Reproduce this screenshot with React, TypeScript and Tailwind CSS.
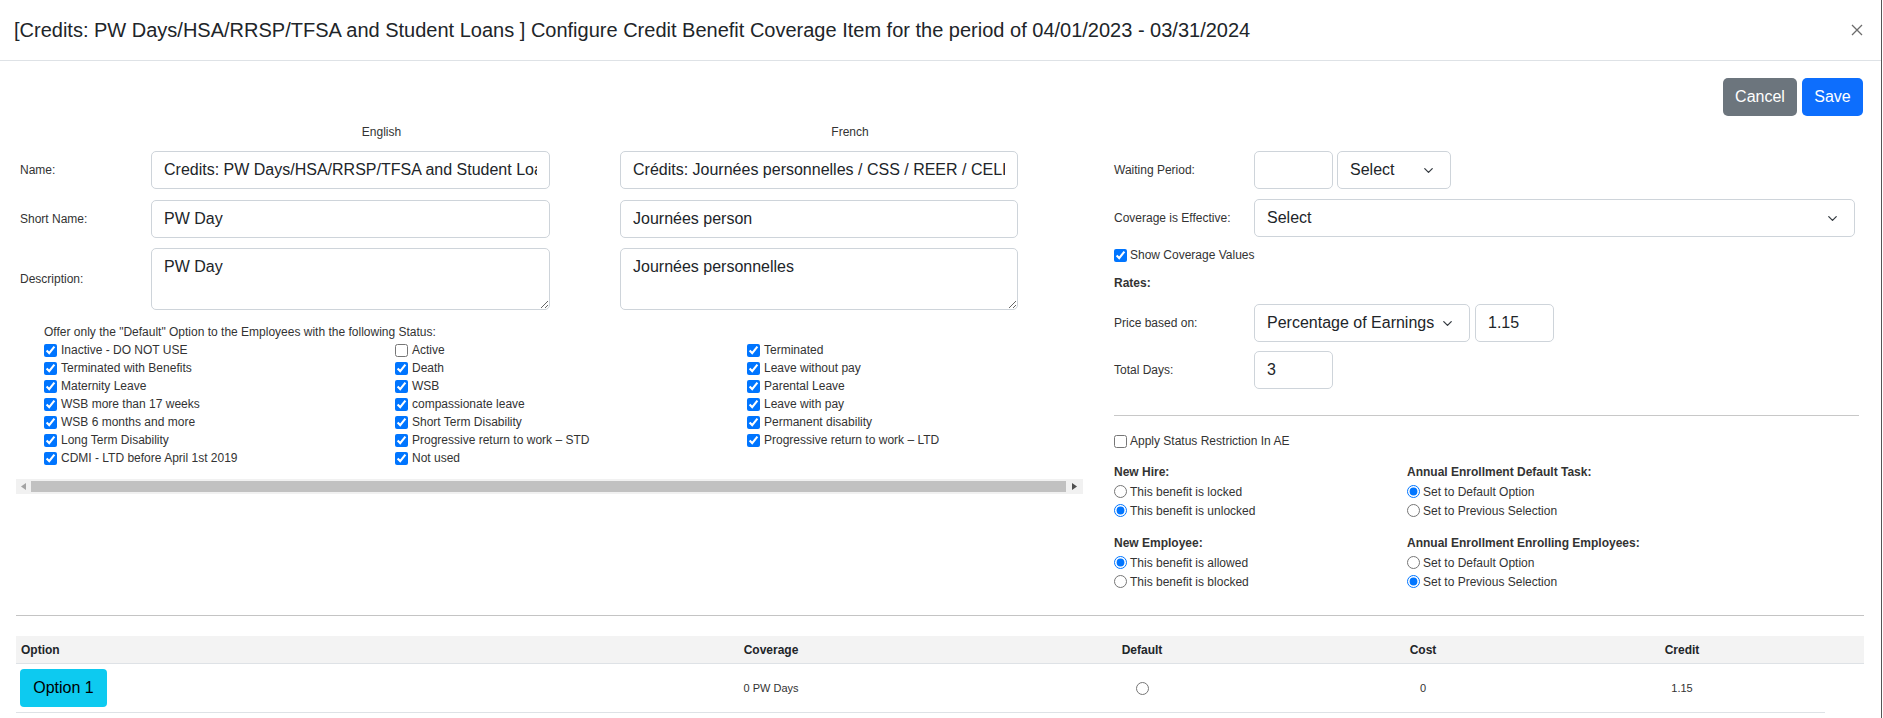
import React from "react";
import { ChevronDown } from "lucide-react";

const statusColumns: { label: string; checked: boolean }[][] = [
  [
    { label: "Inactive - DO NOT USE", checked: true },
    { label: "Terminated with Benefits", checked: true },
    { label: "Maternity Leave", checked: true },
    { label: "WSB more than 17 weeks", checked: true },
    { label: "WSB 6 months and more", checked: true },
    { label: "Long Term Disability", checked: true },
    { label: "CDMI - LTD before April 1st 2019", checked: true },
  ],
  [
    { label: "Active", checked: false },
    { label: "Death", checked: true },
    { label: "WSB", checked: true },
    { label: "compassionate leave", checked: true },
    { label: "Short Term Disability", checked: true },
    { label: "Progressive return to work – STD", checked: true },
    { label: "Not used", checked: true },
  ],
  [
    { label: "Terminated", checked: true },
    { label: "Leave without pay", checked: true },
    { label: "Parental Leave", checked: true },
    { label: "Leave with pay", checked: true },
    { label: "Permanent disability", checked: true },
    { label: "Progressive return to work – LTD", checked: true },
  ],
];

function TextInput({ value, className = "" }: { value: string; className?: string }) {
  return (
    <input
      type="text"
      readOnly
      defaultValue={value}
      className={`h-[38px] rounded-[5px] border border-[#ced4da] bg-white px-[12px] text-[16px] text-[#212529] outline-none ${className}`}
    />
  );
}

function FakeSelect({ value, className = "" }: { value: string; className?: string }) {
  return (
    <div
      className={`flex h-[38px] items-center justify-between rounded-[5px] border border-[#ced4da] bg-white pl-[12px] pr-[14px] text-[16px] text-[#212529] ${className}`}
    >
      <span className="whitespace-nowrap">{value}</span>
      <ChevronDown className="h-[15px] w-[15px] text-[#343a40]" strokeWidth={2} />
    </div>
  );
}

function Radio({ checked, label }: { checked: boolean; label: string }) {
  return (
    <label className="flex h-[19px] items-center text-[12px] text-[#333]">
      <input type="radio" readOnly defaultChecked={checked} className="mr-[3px] h-[13px] w-[13px] accent-[#0075ff]" />
      {label}
    </label>
  );
}

export default function App() {
  return (
    <div className="min-h-[718px] w-[1882px] border-r border-[#555] bg-white font-['Liberation_Sans',Arial,sans-serif] text-[#212529]">
      {/* Modal header */}
      <div className="flex h-[61px] items-center justify-between border-b border-[#dee2e6] pl-[14px] pr-[18px]">
        <h1 className="text-[20px] leading-[24px] text-[#212529]">
          [Credits: PW Days/HSA/RRSP/TFSA and Student Loans ] Configure Credit Benefit Coverage Item for the period of 04/01/2023 - 03/31/2024
        </h1>
        <svg width="12" height="12" viewBox="0 0 12 12" className="shrink-0">
          <path d="M1 1 L11 11 M11 1 L1 11" stroke="#6c6c6c" strokeWidth="1.3" fill="none" />
        </svg>
      </div>

      <div className="pl-[16px] pr-[17px] pt-[17px]">
        {/* Actions */}
        <div className="flex justify-end gap-[5px] pr-[1px]">
          <button className="h-[38px] w-[74px] rounded-[5px] bg-[#6c757d] text-[16px] text-white">Cancel</button>
          <button className="h-[38px] w-[61px] rounded-[5px] bg-[#0d6efd] text-[16px] text-white">Save</button>
        </div>

        <div className="mt-[9px] flex">
          {/* Left: names + statuses */}
          <div className="w-[1067px]">
            <div className="ml-[166px] flex h-[14px] text-[12px] leading-[14px] text-[#333]">
              <div className="w-[399px] text-center">English</div>
              <div className="ml-[70px] w-[398px] text-center">French</div>
            </div>

            <div className="mt-[12px] flex h-[38px] items-center">
              <div className="w-[135px] pl-[4px] text-[12px] text-[#333]">Name:</div>
              <TextInput value="Credits: PW Days/HSA/RRSP/TFSA and Student Loans" className="w-[399px]" />
              <TextInput value="Crédits: Journées personnelles / CSS / REER / CELI et prêts étudiants" className="ml-[70px] w-[398px]" />
            </div>
            <div className="mt-[11px] flex h-[38px] items-center">
              <div className="w-[135px] pl-[4px] text-[12px] text-[#333]">Short Name:</div>
              <TextInput value="PW Day" className="w-[399px]" />
              <TextInput value="Journées person" className="ml-[70px] w-[398px]" />
            </div>
            <div className="mt-[10px] flex h-[62px] items-center">
              <div className="w-[135px] pl-[4px] text-[12px] text-[#333]">Description:</div>
              <textarea
                readOnly
                defaultValue="PW Day"
                className="h-[62px] w-[399px] rounded-[5px] border border-[#ced4da] px-[12px] py-[6px] text-[16px] leading-[24px] text-[#212529] outline-none"
              />
              <textarea
                readOnly
                defaultValue="Journées personnelles"
                className="ml-[70px] h-[62px] w-[398px] rounded-[5px] border border-[#ced4da] px-[12px] py-[6px] text-[16px] leading-[24px] text-[#212529] outline-none"
              />
            </div>

            <div className="mt-[13px] pl-[28px] text-[12px] leading-[18px] text-[#333]">
              <div>Offer only the "Default" Option to the Employees with the following Status:</div>
              <div className="flex">
                {statusColumns.map((col, ci) => (
                  <div key={ci} className={ci === 0 ? "w-[351px]" : ci === 1 ? "w-[352px]" : "flex-1"}>
                    {col.map((s) => (
                      <label key={s.label} className="flex h-[18px] items-center whitespace-nowrap">
                        <input
                          type="checkbox"
                          readOnly
                          defaultChecked={s.checked}
                          className="mr-[4px] h-[13px] w-[13px] accent-[#0075ff]"
                        />
                        {s.label}
                      </label>
                    ))}
                  </div>
                ))}
              </div>
            </div>

            {/* horizontal scrollbar of the status list */}
            <div className="mt-[12px] flex h-[15px] items-center bg-[#f1f1f1]">
              <div className="flex h-[15px] w-[15px] items-center justify-center">
                <svg width="5" height="7" viewBox="0 0 5 7">
                  <polygon points="5,0 0,3.5 5,7" fill="#a3a3a3" />
                </svg>
              </div>
              <div className="h-[11px] flex-1 bg-[#c1c1c1]" />
              <div className="flex h-[15px] w-[17px] items-center justify-center">
                <svg width="5" height="7" viewBox="0 0 5 7">
                  <polygon points="0,0 5,3.5 0,7" fill="#505050" />
                </svg>
              </div>
            </div>
          </div>

          {/* Right: coverage settings */}
          <div className="ml-[31px] w-[745px] pt-[26px] text-[12px] text-[#333]">
            <div className="flex h-[38px] items-center">
              <div className="w-[140px]">Waiting Period:</div>
              <TextInput value="" className="w-[79px]" />
              <FakeSelect value="Select" className="ml-[4px] w-[114px]" />
            </div>
            <div className="mt-[10px] flex h-[38px] items-center">
              <div className="w-[140px]">Coverage is Effective:</div>
              <FakeSelect value="Select" className="w-[601px]" />
            </div>
            <label className="mt-[11px] flex h-[14px] items-center">
              <input type="checkbox" readOnly defaultChecked className="mr-[3px] h-[13px] w-[13px] accent-[#0075ff]" />
              Show Coverage Values
            </label>
            <div className="mt-[14px] h-[14px] font-bold leading-[14px]">Rates:</div>
            <div className="mt-[14px] flex h-[38px] items-center">
              <div className="w-[140px]">Price based on:</div>
              <FakeSelect value="Percentage of Earnings" className="w-[216px]" />
              <TextInput value="1.15" className="ml-[5px] w-[79px]" />
            </div>
            <div className="mt-[9px] flex h-[38px] items-center">
              <div className="w-[140px]">Total Days:</div>
              <TextInput value="3" className="w-[79px]" />
            </div>

            <div className="mt-[26px] border-t border-[#c8c8c8]" />

            <label className="mt-[18px] flex h-[14px] items-center">
              <input type="checkbox" readOnly className="mr-[3px] h-[13px] w-[13px] accent-[#0075ff]" />
              Apply Status Restriction In AE
            </label>

            <div className="mt-[15px] flex">
              <div className="w-[293px]">
                <div className="h-[19px] font-bold leading-[19px]">New Hire:</div>
                <Radio checked={false} label="This benefit is locked" />
                <Radio checked label="This benefit is unlocked" />
                <div className="mt-[14px] h-[19px] font-bold leading-[19px]">New Employee:</div>
                <Radio checked label="This benefit is allowed" />
                <Radio checked={false} label="This benefit is blocked" />
              </div>
              <div>
                <div className="h-[19px] font-bold leading-[19px]">Annual Enrollment Default Task:</div>
                <Radio checked label="Set to Default Option" />
                <Radio checked={false} label="Set to Previous Selection" />
                <div className="mt-[14px] h-[19px] font-bold leading-[19px]">Annual Enrollment Enrolling Employees:</div>
                <Radio checked={false} label="Set to Default Option" />
                <Radio checked label="Set to Previous Selection" />
              </div>
            </div>
          </div>
        </div>

        <div className="mt-[24px] border-t border-[#c4c4c4]" />

        {/* Options table */}
        <div className="mt-[20px] grid h-[28px] grid-cols-[589px_332px_410px_152px_366px] items-center border-b border-[#dee2e6] bg-[#f3f3f3] text-[12px] font-bold text-[#212529]">
          <div className="pl-[5px]">Option</div>
          <div className="text-center">Coverage</div>
          <div className="text-center">Default</div>
          <div className="text-center">Cost</div>
          <div className="text-center">Credit</div>
        </div>
        <div className="grid h-[48px] grid-cols-[589px_332px_410px_152px_366px] items-center text-[11px] text-[#333]">
          <div className="pl-[4px]">
            <button className="h-[38px] w-[87px] rounded-[4px] bg-[#0dcaf0] text-[16px] text-black">Option 1</button>
          </div>
          <div className="text-center">0 PW Days</div>
          <div className="flex justify-center">
            <input type="radio" readOnly className="h-[13px] w-[13px]" />
          </div>
          <div className="text-center">0</div>
          <div className="text-center">1.15</div>
        </div>
        <div className="w-[1809px] border-t border-[#dee2e6]" />
      </div>
    </div>
  );
}
